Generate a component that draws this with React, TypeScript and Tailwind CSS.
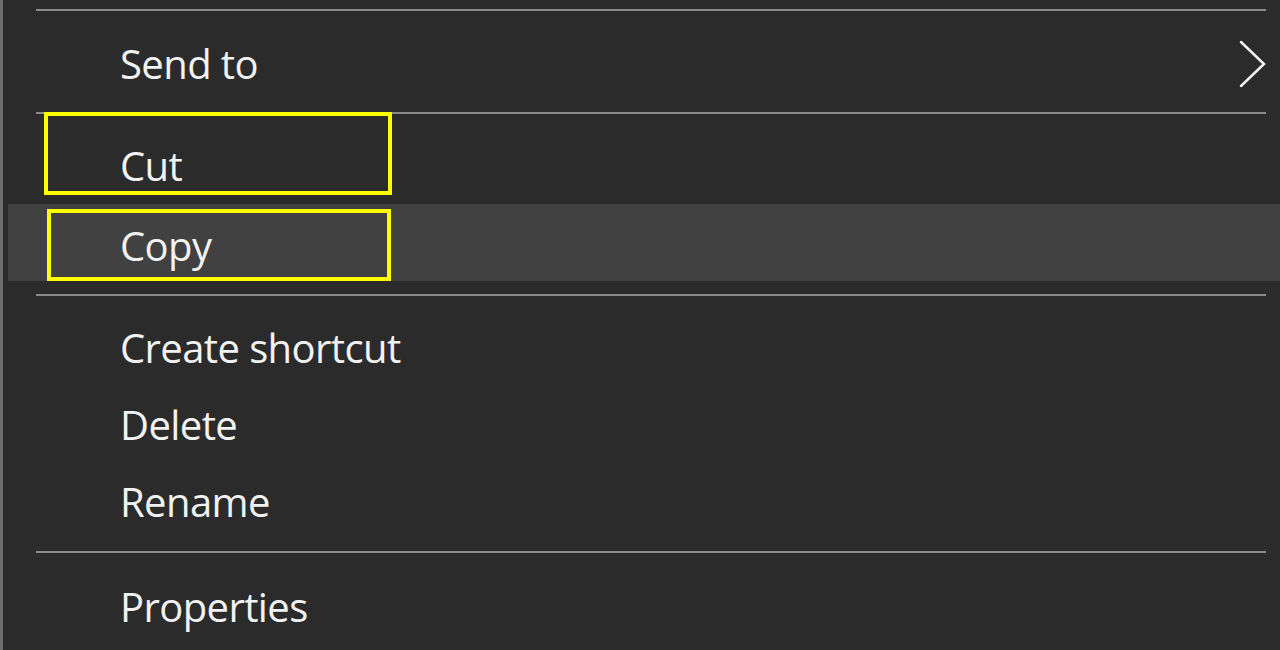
import React from 'react';

type Item = { label: string; submenu?: boolean; hot?: boolean };

function Separator({ className = '' }: { className?: string }) {
  return <div className={`ml-[33px] mr-[14px] h-[2px] bg-[#8a8a8a] ${className}`} />;
}

function Chevron() {
  return (
    <svg width="30" height="50" viewBox="0 0 30 50" fill="none" className="mr-[12px]">
      <path d="M3 3 L26 25 L3 47" stroke="#f2f2f2" strokeWidth="2.5" strokeLinecap="round" strokeLinejoin="miter" />
    </svg>
  );
}

function MenuRow({ item, className = '' }: { item: Item; className?: string }) {
  return (
    <div
      className={`flex h-[77px] items-start justify-between pt-[6px] ${
        item.hot ? 'ml-[5px] bg-[#414141] pl-[112px]' : 'pl-[117px]'
      } ${className}`}
    >
      <span className="text-[40px] leading-[71px] tracking-[-0.6px] text-[#f2f2f2]">{item.label}</span>
      {item.submenu && (
        <div className="flex h-[71px] items-center">
          <Chevron />
        </div>
      )}
    </div>
  );
}

export default function App() {
  return (
    <div
      className="relative h-[650px] w-[1280px] overflow-hidden border-l-[3px] border-[#6e6e6e] bg-[#2b2b2b]"
      style={{ fontFamily: '"Open Sans", "Noto Sans", sans-serif' }}
    >
      <Separator className="mt-[9px]" />
      <MenuRow item={{ label: 'Send to', submenu: true }} className="mt-[11px]" />
      <Separator className="mt-[13px]" />
      <MenuRow item={{ label: 'Cut' }} className="mt-[10px]" />
      <MenuRow item={{ label: 'Copy', hot: true }} className="mt-[3px]" />
      <Separator className="mt-[13px]" />
      <MenuRow item={{ label: 'Create shortcut' }} className="mt-[10px]" />
      <MenuRow item={{ label: 'Delete' }} />
      <MenuRow item={{ label: 'Rename' }} />
      <Separator className="mt-[14px]" />
      <MenuRow item={{ label: 'Properties' }} className="mt-[12px]" />

      {/* highlight frames over Cut and Copy */}
      <div className="absolute left-[41px] top-[112px] h-[83px] w-[348px] border-4 border-[#ffff00]" />
      <div className="absolute left-[44px] top-[209px] h-[72px] w-[344px] border-4 border-[#ffff00]" />
    </div>
  );
}
